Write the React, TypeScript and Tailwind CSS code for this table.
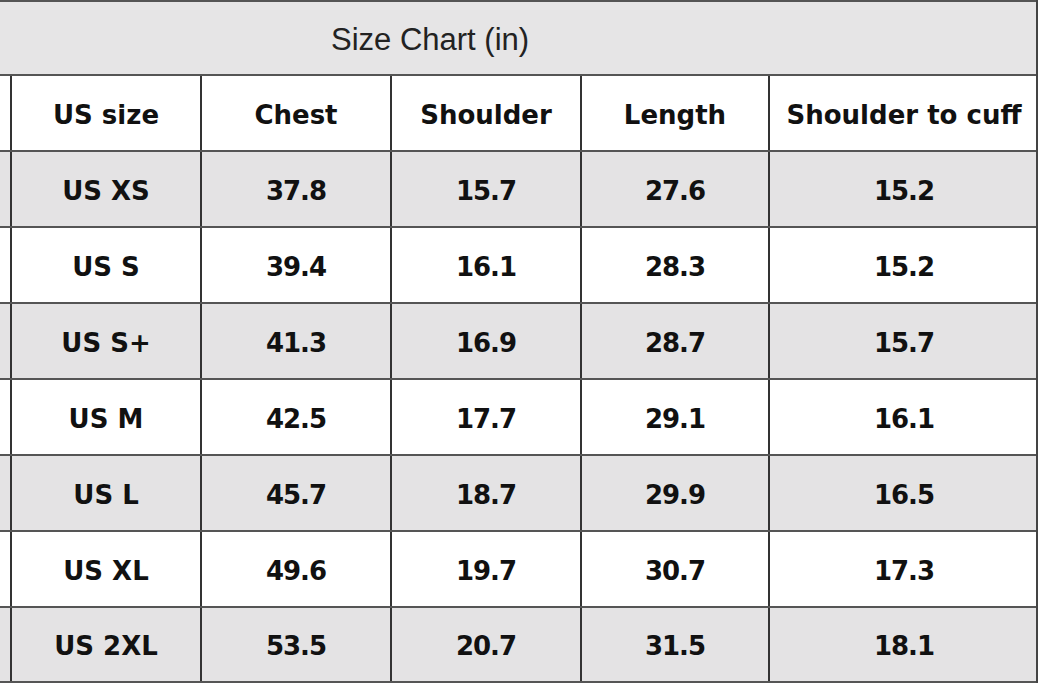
const headers = ["US size", "Chest", "Shoulder", "Length", "Shoulder to cuff"];

const rows = [
  ["US XS", "37.8", "15.7", "27.6", "15.2"],
  ["US S", "39.4", "16.1", "28.3", "15.2"],
  ["US S+", "41.3", "16.9", "28.7", "15.7"],
  ["US M", "42.5", "17.7", "29.1", "16.1"],
  ["US L", "45.7", "18.7", "29.9", "16.5"],
  ["US XL", "49.6", "19.7", "30.7", "17.3"],
  ["US 2XL", "53.5", "20.7", "31.5", "18.1"],
];

const gridCols = "grid grid-cols-[10px_190px_190px_190px_188px_270px]";

function Row({
  cells,
  shaded,
  numeric,
  last,
}: {
  cells: string[];
  shaded: boolean;
  numeric: boolean;
  last?: boolean;
}) {
  return (
    <div
      className={`${gridCols} ${last ? "h-[75px]" : "h-[76px]"} border-b-2 border-[#555] ${
        shaded ? "bg-[#e4e3e4]" : "bg-white"
      }`}
    >
      <div />
      {cells.map((c, i) => (
        <div
          key={i}
          className={`flex items-center justify-center border-l-2 border-[#333] pt-1 text-[26px] font-bold text-[#111] ${
            numeric && i > 0 ? "tracking-[-1px]" : ""
          }`}
        >
          {c}
        </div>
      ))}
    </div>
  );
}

export default function App() {
  return (
    <div className="h-[691px] w-[1043px] overflow-hidden bg-white font-['DejaVu_Sans',sans-serif]">
      <div className="w-[1038px] border-r-2 border-[#444]">
        <div className="flex h-[76px] items-center border-t-2 border-b-2 border-[#555] bg-[#e6e5e6] pl-[331px] pt-1 font-['Liberation_Sans',Arial,sans-serif] text-[31px] text-[#222]">
          Size Chart (in)
        </div>
        <Row cells={headers} shaded={false} numeric={false} />
        {rows.map((r, i) => (
          <Row
            key={r[0]}
            cells={r}
            shaded={i % 2 === 0}
            numeric={true}
            last={i === rows.length - 1}
          />
        ))}
      </div>
    </div>
  );
}
